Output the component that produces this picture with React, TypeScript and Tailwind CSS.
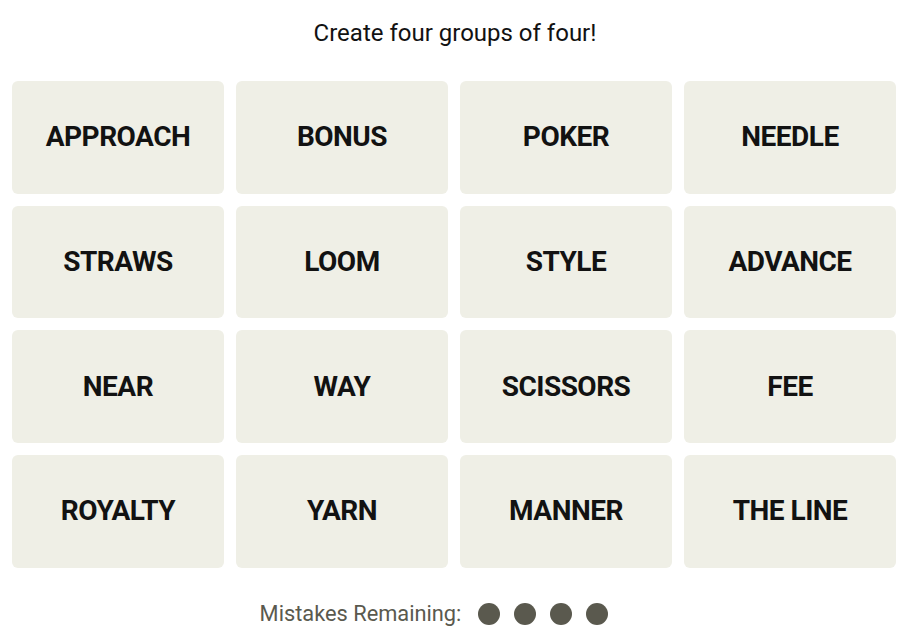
const words = [
  "APPROACH", "BONUS", "POKER", "NEEDLE",
  "STRAWS", "LOOM", "STYLE", "ADVANCE",
  "NEAR", "WAY", "SCISSORS", "FEE",
  "ROYALTY", "YARN", "MANNER", "THE LINE",
];

export default function App() {
  return (
    <div className="w-[910px] h-[633px] bg-white font-['Roboto',sans-serif] text-[#121212]">
      <p className="pt-[19px] text-center text-[24px] leading-[28px]">
        Create four groups of four!
      </p>
      <div className="ml-3 mt-[34px] grid w-[884px] grid-cols-4 gap-3">
        {words.map((w) => (
          <button
            key={w}
            className="flex h-[112.7px] items-center justify-center rounded-md bg-[#efefe6] text-[28px] font-bold tracking-[-0.5px]"
          >
            {w}
          </button>
        ))}
      </div>
      <div className="mt-[32px] flex h-[28px] items-center justify-center pr-[42px] text-[21.8px] leading-[28px] text-[#5a594e]">
        <span className="mr-[17px]">Mistakes Remaining:</span>
        <div className="flex gap-[14px]">
          {[0, 1, 2, 3].map((i) => (
            <span key={i} className="h-[22px] w-[22px] rounded-full bg-[#5a594e]" />
          ))}
        </div>
      </div>
    </div>
  );
}
